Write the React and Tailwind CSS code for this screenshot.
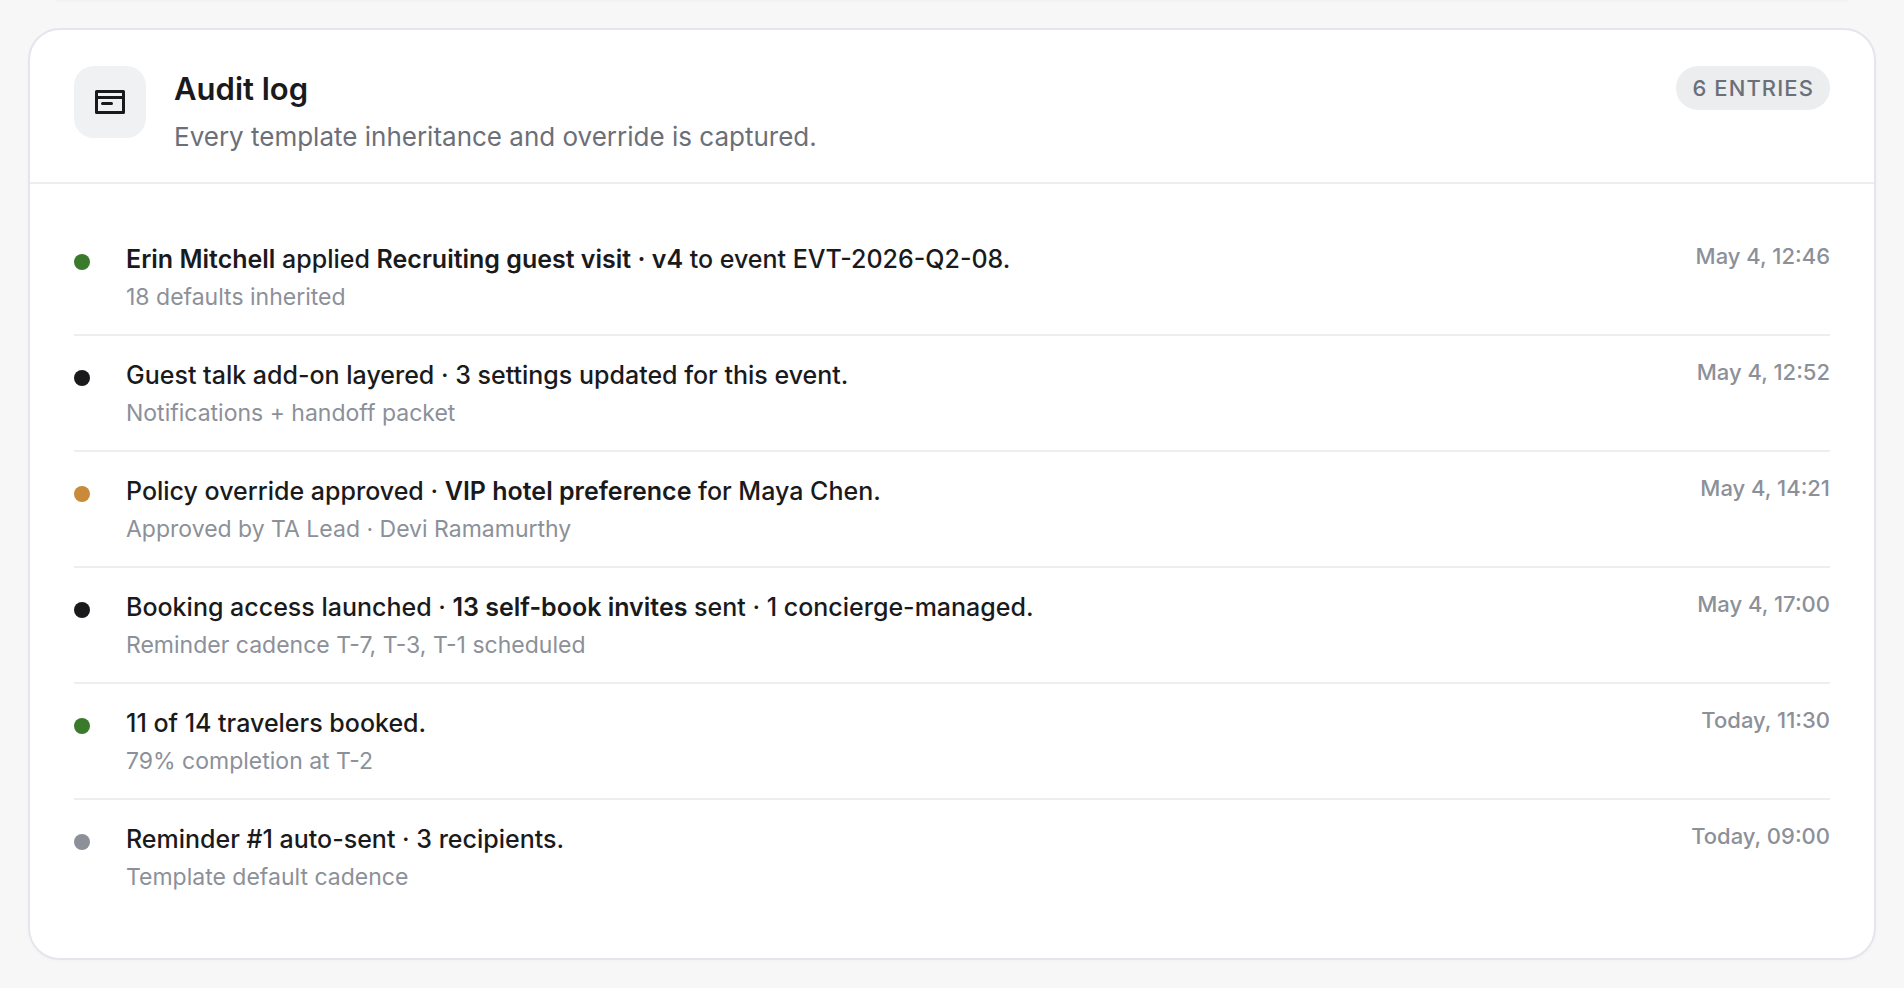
// Audit log card for an event.
//
// Entries are plain data: the tone picks the dot colour, and the title is
// JSX so that parts of the sentence can be emphasised.

const TONES = {
  success: "bg-[#3a7a2c]",
  neutral: "bg-[#1a1a1c]",
  warning: "bg-[#c98a3a]",
  muted: "bg-[#8c9099]",
};

const ENTRIES = [
  {
    tone: "success",
    title: (
      <>
        <strong className="font-semibold">Erin Mitchell</strong> applied{" "}
        <strong className="font-semibold">Recruiting guest visit · v4</strong> to event EVT-2026-Q2-08.
      </>
    ),
    detail: "18 defaults inherited",
    time: "May 4, 12:46",
  },
  {
    tone: "neutral",
    title: "Guest talk add-on layered · 3 settings updated for this event.",
    detail: "Notifications + handoff packet",
    time: "May 4, 12:52",
  },
  {
    tone: "warning",
    title: (
      <>
        Policy override approved · <strong className="font-semibold">VIP hotel preference</strong> for Maya Chen.
      </>
    ),
    detail: "Approved by TA Lead · Devi Ramamurthy",
    time: "May 4, 14:21",
  },
  {
    tone: "neutral",
    title: (
      <>
        Booking access launched · <strong className="font-semibold">13 self-book invites</strong> sent · 1
        concierge-managed.
      </>
    ),
    detail: "Reminder cadence T-7, T-3, T-1 scheduled",
    time: "May 4, 17:00",
  },
  {
    tone: "success",
    title: "11 of 14 travelers booked.",
    detail: "79% completion at T-2",
    time: "Today, 11:30",
  },
  {
    tone: "muted",
    title: "Reminder #1 auto-sent · 3 recipients.",
    detail: "Template default cadence",
    time: "Today, 09:00",
  },
];

function LogIcon() {
  return (
    <svg
      className="h-9 w-9"
      viewBox="0 0 36 36"
      fill="none"
      stroke="currentColor"
      strokeWidth="3"
      strokeLinecap="round"
      strokeLinejoin="round"
      aria-hidden="true"
    >
      <path d="M4.5 7.5h27v21h-27zM4.5 13.5h27M10.5 19.5h9" />
    </svg>
  );
}

function Entry({ tone, title, detail, time }) {
  return (
    <li className="flex items-start border-b-2 border-[#eeeeef] pt-5 pb-[18px] last:border-b-0">
      <span className={`mt-3.5 mr-9 h-4 w-4 shrink-0 rounded-full ${TONES[tone]}`} />
      <div className="flex-1">
        <p className="text-[25px] leading-[38px] font-medium">{title}</p>
        <p className="text-[23px] leading-[38px] text-[#8c9099]">{detail}</p>
      </div>
      <time className="text-[22px] leading-8 font-medium text-[#8c9099]">{time}</time>
    </li>
  );
}

export default function App() {
  return (
    <main className="min-h-screen bg-[#f7f7f7] font-['Inter',sans-serif] text-[#1a1a1c]">
      <div className="mx-14 h-0.5 bg-[#f3f3f3]" />
      <div className="px-7 pt-[26px] pb-7">
        <section className="rounded-[32px] border-2 border-[#e5e5eb] bg-white shadow-[0_2px_4px_rgba(0,0,0,0.02)]">
          <header className="flex items-start border-b-2 border-[#eeeeef] px-11 pt-9 pb-[26px]">
            <div className="mr-7 flex h-[72px] w-[72px] items-center justify-center rounded-[20px] bg-[#f0f1f3]">
              <LogIcon />
            </div>
            <div className="flex-1">
              <h2 className="text-[31px] leading-[46px] font-semibold">Audit log</h2>
              <p className="mt-1.5 text-[26px] leading-[38px] text-[#6b7078]">
                Every template inheritance and override is captured.
              </p>
            </div>
            <span className="rounded-full bg-[#ecedef] px-4 text-[22px] leading-[44px] font-medium tracking-wider text-[#6b7078]">
              6 ENTRIES
            </span>
          </header>
          <ul className="px-11 pt-9 pb-11">
            {ENTRIES.map((entry) => (
              <Entry key={entry.detail} {...entry} />
            ))}
          </ul>
        </section>
      </div>
    </main>
  );
}
